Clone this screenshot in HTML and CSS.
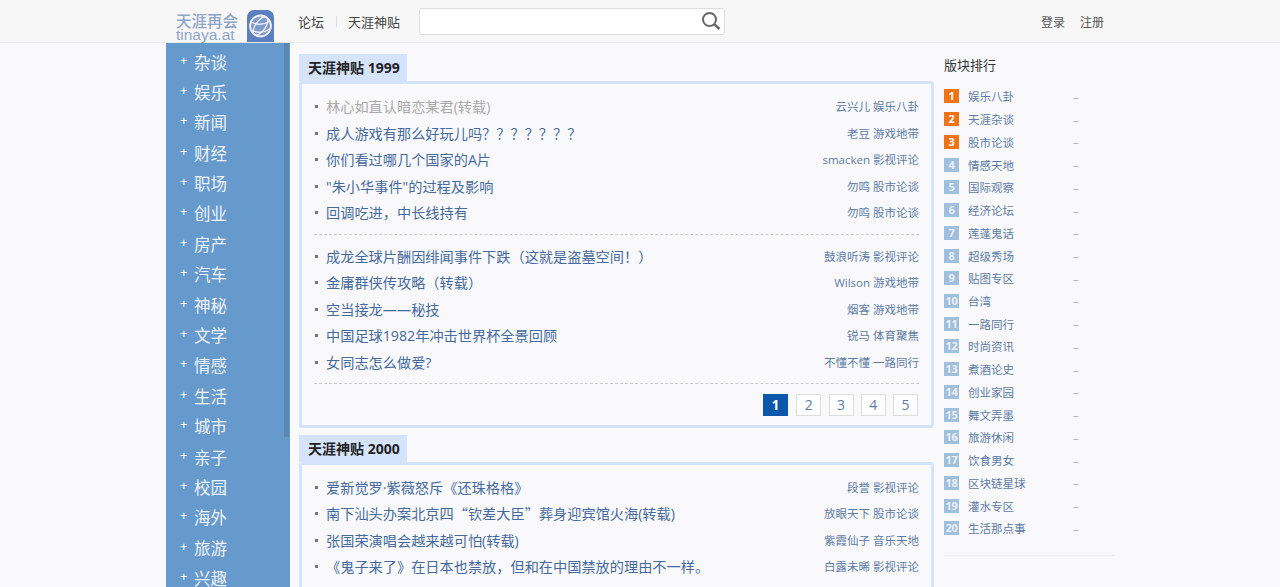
FILE: index.html
```html
<!DOCTYPE html>
<html lang="zh-CN">
<head>
<meta charset="utf-8">
<title>天涯神贴</title>
<link rel="stylesheet" href="styles.css">
</head>
<body>
<header class="topbar">
  <div class="logo">
    <div class="logo-text"><span class="logo-cn">天涯再会</span><span class="logo-en">tinaya.at</span></div>
    <div class="logo-badge">
      <svg viewBox="0 0 27 32" width="27" height="32"><circle cx="13.5" cy="16" r="10.5" fill="#e9e6f2" fill-opacity=".25" stroke="#f1eef6" stroke-width="1.8"/><ellipse cx="13.5" cy="16" rx="5" ry="10.5" fill="none" stroke="#f1eef6" stroke-width="1.3" transform="rotate(35 13.5 16)"/><path d="M4 12c6 3 13 3 19-1M4 20c6 3 13 3 19-1" fill="none" stroke="#f1eef6" stroke-width="1.3"/></svg>
    </div>
  </div>
  <nav class="topnav"><a>论坛</a><i class="sep"></i><a>天涯神贴</a></nav>
  <div class="search">
    <svg class="search-icon" viewBox="0 0 20 20" width="20" height="20"><circle cx="8.5" cy="8.5" r="6.5" fill="none" stroke="#666" stroke-width="2"/><path d="M13.5 13.5l5 4.5" stroke="#666" stroke-width="2.4"/></svg>
  </div>
  <div class="auth"><a>登录</a><a>注册</a></div>
</header>
<div class="wrap">
  <aside class="side">
    <ul class="side-list">
      <li><span class="plus">+</span>杂谈</li>
      <li><span class="plus">+</span>娱乐</li>
      <li><span class="plus">+</span>新闻</li>
      <li><span class="plus">+</span>财经</li>
      <li><span class="plus">+</span>职场</li>
      <li><span class="plus">+</span>创业</li>
      <li><span class="plus">+</span>房产</li>
      <li><span class="plus">+</span>汽车</li>
      <li><span class="plus">+</span>神秘</li>
      <li><span class="plus">+</span>文学</li>
      <li><span class="plus">+</span>情感</li>
      <li><span class="plus">+</span>生活</li>
      <li><span class="plus">+</span>城市</li>
      <li><span class="plus">+</span>亲子</li>
      <li><span class="plus">+</span>校园</li>
      <li><span class="plus">+</span>海外</li>
      <li><span class="plus">+</span>旅游</li>
      <li><span class="plus">+</span>兴趣</li>
    </ul>
    <div class="thumb"></div>
  </aside>
  <main class="main">
    <section class="block">
      <h2 class="tab">天涯神贴 1999</h2>
      <div class="box">
        <ul class="rows">
          <li class="row visited"><a class="t">林心如直认暗恋某君(转载)</a><span class="m">云兴儿 娱乐八卦</span></li>
          <li class="row"><a class="t">成人游戏有那么好玩儿吗？？？？？？？</a><span class="m">老豆 游戏地带</span></li>
          <li class="row"><a class="t">你们看过哪几个国家的A片</a><span class="m">smacken 影视评论</span></li>
          <li class="row"><a class="t">"朱小华事件"的过程及影响</a><span class="m">勿鸣 股市论谈</span></li>
          <li class="row"><a class="t">回调吃进，中长线持有</a><span class="m">勿鸣 股市论谈</span></li>
        </ul>
        <ul class="rows rows-split">
          <li class="row"><a class="t">成龙全球片酬因绯闻事件下跌（这就是盗墓空间！）</a><span class="m">鼓浪听涛 影视评论</span></li>
          <li class="row"><a class="t">金庸群侠传攻略（转载）</a><span class="m">Wilson 游戏地带</span></li>
          <li class="row"><a class="t">空当接龙——秘技</a><span class="m">烟客 游戏地带</span></li>
          <li class="row"><a class="t">中国足球1982年冲击世界杯全景回顾</a><span class="m">锐马 体育聚焦</span></li>
          <li class="row"><a class="t">女同志怎么做爱?</a><span class="m">不懂不懂 一路同行</span></li>
        </ul>
        <div class="pager"><a class="cur">1</a><a>2</a><a>3</a><a>4</a><a>5</a></div>
      </div>
    </section>
    <section class="block">
      <h2 class="tab">天涯神贴 2000</h2>
      <div class="box">
        <ul class="rows">
          <li class="row"><a class="t">爱新觉罗·紫薇怒斥《还珠格格》</a><span class="m">段誉 影视评论</span></li>
          <li class="row"><a class="t">南下汕头办案北京四<span class="q">“</span>钦差大臣<span class="q">”</span>葬身迎宾馆火海(转载)</a><span class="m">放眼天下 股市论谈</span></li>
          <li class="row"><a class="t">张国荣演唱会越来越可怕(转载)</a><span class="m">紫霞仙子 音乐天地</span></li>
          <li class="row"><a class="t">《鬼子来了》在日本也禁放，但和在中国禁放的理由不一样。</a><span class="m">白露未晞 影视评论</span></li>
        </ul>
      </div>
    </section>
  </main>
  <aside class="rank">
    <h3 class="rank-title">版块排行</h3>
    <ol class="rank-list">
      <li><b class="n hot">1</b><a>娱乐八卦</a><span>–</span></li>
      <li><b class="n hot">2</b><a>天涯杂谈</a><span>–</span></li>
      <li><b class="n hot">3</b><a>股市论谈</a><span>–</span></li>
      <li><b class="n">4</b><a>情感天地</a><span>–</span></li>
      <li><b class="n">5</b><a>国际观察</a><span>–</span></li>
      <li><b class="n">6</b><a>经济论坛</a><span>–</span></li>
      <li><b class="n">7</b><a>莲蓬鬼话</a><span>–</span></li>
      <li><b class="n">8</b><a>超级秀场</a><span>–</span></li>
      <li><b class="n">9</b><a>贴图专区</a><span>–</span></li>
      <li><b class="n">10</b><a>台湾</a><span>–</span></li>
      <li><b class="n">11</b><a>一路同行</a><span>–</span></li>
      <li><b class="n">12</b><a>时尚资讯</a><span>–</span></li>
      <li><b class="n">13</b><a>煮酒论史</a><span>–</span></li>
      <li><b class="n">14</b><a>创业家园</a><span>–</span></li>
      <li><b class="n">15</b><a>舞文弄墨</a><span>–</span></li>
      <li><b class="n">16</b><a>旅游休闲</a><span>–</span></li>
      <li><b class="n">17</b><a>饮食男女</a><span>–</span></li>
      <li><b class="n">18</b><a>区块链星球</a><span>–</span></li>
      <li><b class="n">19</b><a>灌水专区</a><span>–</span></li>
      <li><b class="n">20</b><a>生活那点事</a><span>–</span></li>
    </ol>
  </aside>
</div>
</body>
</html>
```
FILE: styles.css
```css
* { box-sizing: border-box; }
html, body { margin: 0; height: 587px; overflow: hidden; }
body { background: #f9f9fb; font-family: "Open Sans", "Noto Sans CJK SC", sans-serif; color: #333; }
ul, ol { list-style: none; margin: 0; padding: 0; }
.topbar { height: 43px; display: flex; align-items: center; background: #f7f7f7; border-bottom: 1px solid #ebebeb; padding-left: 176px; position: relative; }
.logo { display: flex; width: 98px; height: 42px; align-items: flex-end; }
.logo-text { width: 71px; display: flex; flex-direction: column; color: #8fa5c8; }
.logo-cn { font-size: 15.5px; line-height: 16px; font-weight: 500; white-space: nowrap; }
.logo-en { font-family: "Liberation Sans", sans-serif; font-size: 15.5px; font-weight: 400; line-height: 12px; height: 13px; white-space: nowrap; }
.logo-badge { width: 27px; height: 32px; background: #5c80bf; border-radius: 7px 7px 0 0; display: flex; }
.topnav { display: flex; align-items: center; margin-left: 24px; font-size: 13px; color: #444; width: 121px; }
.sep { width: 1px; height: 11px; background: #ddd; margin: 0 11px 0 12px; }
.search { width: 306px; height: 27px; background: #fff; border: 1px solid #ddd; border-radius: 3px; display: flex; justify-content: flex-end; align-items: center; padding-right: 3px; }
.auth { margin-left: auto; margin-right: 176px; display: flex; gap: 15px; font-size: 12px; color: #555; padding-top: 2px; }
.wrap { display: flex; padding-left: 166px; }
.side { position: relative; width: 124px; height: 544px; background: #6699cc; flex: none; overflow: hidden; }
.side-list { padding-top: 4.5px; }
.side-list li { height: 30.4px; line-height: 30.4px; color: #eef3fa; font-size: 16.5px; padding-left: 28px; position: relative; white-space: nowrap; }
.plus { position: absolute; left: 14px; top: -3px; font-size: 13px; color: #fff; }
.thumb { position: absolute; top: 0; right: 1px; width: 5px; height: 394px; background: #5a86b6; }
.main { width: 635px; margin-left: 9px; flex: none; padding-top: 11px; }
.block { margin-bottom: 7px; }
.tab { margin: 0; width: 108px; height: 27px; background: #d6e4fb; font-size: 14px; font-weight: 700; color: #222; line-height: 28px; padding-left: 9px; white-space: nowrap; }
.box { border: 3px solid #d6e4fb; border-radius: 3px; padding: 9px 12px 9px; background: #f9f9fb; }
.rows { padding-bottom: 8px; }
.row { display: flex; justify-content: space-between; align-items: center; height: 26.5px; white-space: nowrap; position: relative; padding-left: 12px; }
.row::before { content: ""; position: absolute; left: 1px; top: 12px; width: 3px; height: 3px; background: #777; }
.t { color: #466a9e; font-size: 14.2px; }
.q { font-family: "Noto Sans CJK SC", sans-serif; }
.m { color: #5d7ba6; font-size: 11.5px; }
.visited .t { color: #a9a9a9; }
.rows-split { border-top: 1px dashed #ccc; border-bottom: 1px dashed #ccc; padding-top: 8px; padding-bottom: 8px; }
.pager { display: flex; justify-content: flex-end; gap: 7.25px; margin-top: 9.5px; padding-right: 1px; }
.pager a { width: 25px; height: 22px; background: #fff; border: 1px solid #ddd; color: #5d7ba6; font-size: 14px; line-height: 20px; text-align: center; }
.pager .cur { background: #0b57ab; border-color: #0b57ab; color: #fff; font-weight: 700; margin-right: 1px; }
.rank { width: 171px; margin-left: 10px; padding-top: 12px; border-bottom: 1px solid #eee; height: 513px; flex: none; }
.rank-title { margin: 0 0 10px; font-size: 13px; font-weight: 400; line-height: 20px; color: #333; }
.rank-list li { display: flex; align-items: center; height: 22.74px; font-size: 11.5px; color: #5d7ba6; }
.rank-list a { width: 105px; margin-left: 9px; white-space: nowrap; }
.rank-list span { color: #aaa; font-size: 11px; }
.n { width: 15px; height: 14px; background: #a0bfdc; color: #e9f0f8; font-size: 11px; letter-spacing: -0.3px; line-height: 14px; text-align: center; font-weight: 700; flex: none; }
.n.hot { background: #ee7417; color: #fff; }
```
